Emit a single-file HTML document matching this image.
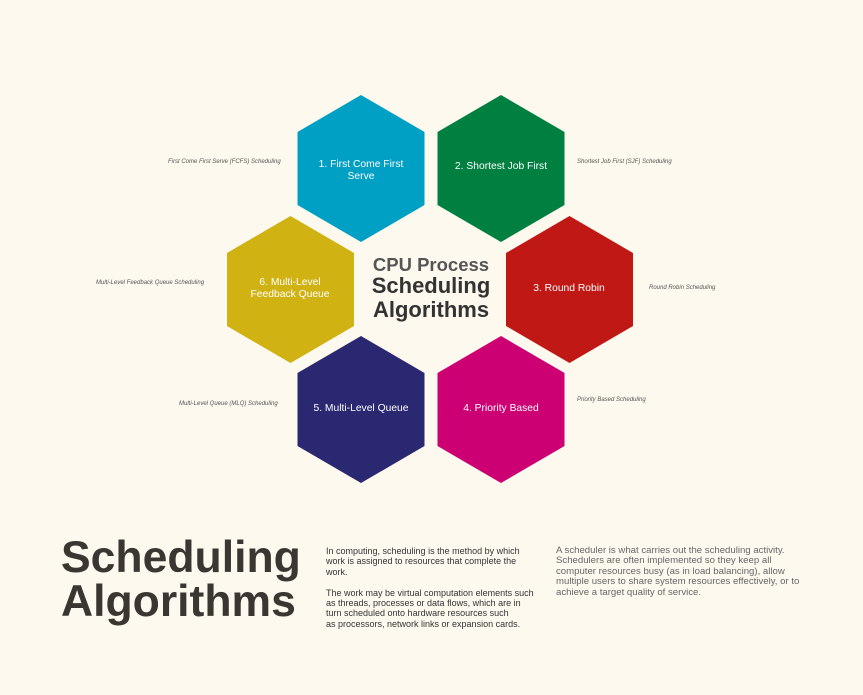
<!DOCTYPE html>
<html><head><meta charset="utf-8"><style>
body{margin:0;width:863px;height:695px;background:#fdf9ef;position:relative;overflow:hidden;font-family:"Liberation Sans",sans-serif;color:#3a3732}
.a{position:absolute;white-space:nowrap}
.lbl{font-size:6px;font-style:italic;color:#555}
.hx{position:absolute;color:#fff;font-size:10.3px;text-align:center;line-height:12px;width:128px}
.p{font-size:9px;line-height:10.4px;color:#333}
</style></head><body>
<svg width="863" height="695" style="position:absolute;left:0;top:0">
<g>
<polygon points="361,95 424.5,132 424.5,205 361,242 297.5,205 297.5,132" fill="#00a0c4"/>
<polygon points="501,95 564.5,132 564.5,205 501,242 437.5,205 437.5,132" fill="#008040"/>
<polygon points="290.5,216 354,253 354,326 290.5,363 227,326 227,253" fill="#d0b212"/>
<polygon points="569.5,216 633,253 633,326 569.5,363 506,326 506,253" fill="#c01814"/>
<polygon points="361,336 424.5,373 424.5,446 361,483 297.5,446 297.5,373" fill="#2a2870"/>
<polygon points="501,336 564.5,373 564.5,446 501,483 437.5,446 437.5,373" fill="#cc0072"/>
</g></svg>
<div class="hx" style="left:297px;top:159px">1. First Come First<br>Serve</div>
<div class="hx" style="left:437px;top:161px">2. Shortest Job First</div>
<div class="hx" style="left:226px;top:277px">6. Multi-Level<br>Feedback Queue</div>
<div class="hx" style="left:505px;top:283px">3. Round Robin</div>
<div class="hx" style="left:297px;top:403px">5. Multi-Level Queue</div>
<div class="hx" style="left:437px;top:403px">4. Priority Based</div>
<div class="a" style="left:351px;top:255px;width:160px;text-align:center;font-weight:bold;color:#555;font-size:18.5px;line-height:20px">CPU Process</div>
<div class="a" style="left:351px;top:274px;width:160px;text-align:center;font-weight:bold;color:#333;font-size:22px;line-height:24px">Scheduling<br>Algorithms</div>
<div class="a lbl" style="left:168px;top:159px">First Come First Serve (FCFS) Scheduling</div>
<div class="a lbl" style="left:577px;top:159px">Shortest Job First (SJF) Scheduling</div>
<div class="a lbl" style="left:96px;top:280px">Multi-Level Feedback Queue Scheduling</div>
<div class="a lbl" style="left:649px;top:285px">Round Robin Scheduling</div>
<div class="a lbl" style="left:179px;top:401px">Multi-Level Queue (MLQ) Scheduling</div>
<div class="a lbl" style="left:577px;top:397px">Priority Based Scheduling</div>
<div class="a" style="left:61px;top:536px;font-weight:bold;font-size:44.5px;line-height:44px;color:#3a3732">Scheduling<br>Algorithms</div>
<div class="a p" style="left:326px;top:546px">In computing, scheduling is the method by which<br>work is assigned to resources that complete the<br>work.<br><br>The work may be virtual computation elements such<br>as threads, processes or data flows, which are in<br>turn scheduled onto hardware resources such<br>as processors, network links or expansion cards.</div>
<div class="a p" style="left:556px;top:546px;color:#666;font-size:9.6px">A scheduler is what carries out the scheduling activity.<br>Schedulers are often implemented so they keep all<br>computer resources busy (as in load balancing), allow<br>multiple users to share system resources effectively, or to<br>achieve a target quality of service.</div>
</body></html>
